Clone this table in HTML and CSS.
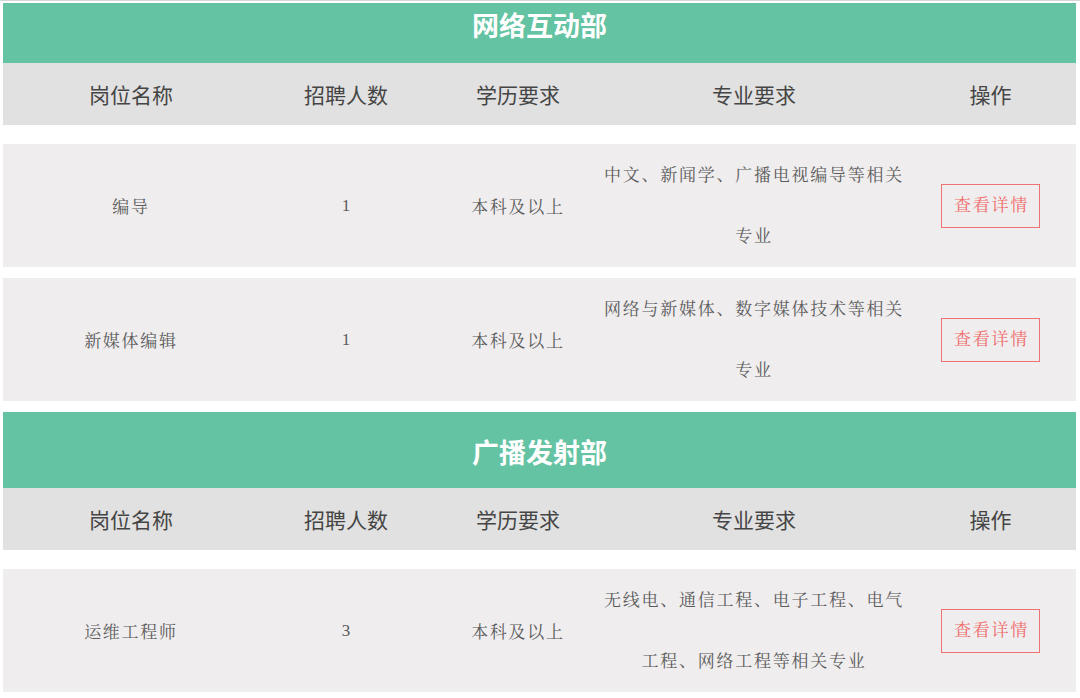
FILE: index.html
```html
<!DOCTYPE html>
<html lang="zh-CN">
<head>
<meta charset="utf-8">
<title>招聘岗位</title>
<link rel="stylesheet" href="styles.css">
</head>
<body>
<div class="page">
  <section class="dept">
    <h2 class="dept-title dept-title--cut">网络互动部</h2>
    <div class="grid table-head">
      <div>岗位名称</div><div>招聘人数</div><div>学历要求</div><div>专业要求</div><div>操作</div>
    </div>
    <div class="grid row">
      <div class="cell">编导</div>
      <div class="cell num">1</div>
      <div class="cell">本科及以上</div>
      <div class="cell major"><p>中文、新闻学、广播电视编导等相关专业</p></div>
      <div class="cell"><a class="btn" href="#">查看详情</a></div>
    </div>
    <div class="grid row">
      <div class="cell">新媒体编辑</div>
      <div class="cell num">1</div>
      <div class="cell">本科及以上</div>
      <div class="cell major"><p>网络与新媒体、数字媒体技术等相关专业</p></div>
      <div class="cell"><a class="btn" href="#">查看详情</a></div>
    </div>
  </section>
  <section class="dept">
    <h2 class="dept-title">广播发射部</h2>
    <div class="grid table-head">
      <div>岗位名称</div><div>招聘人数</div><div>学历要求</div><div>专业要求</div><div>操作</div>
    </div>
    <div class="grid row">
      <div class="cell">运维工程师</div>
      <div class="cell num">3</div>
      <div class="cell">本科及以上</div>
      <div class="cell major"><p>无线电、通信工程、电子工程、电气工程、网络工程等相关专业</p></div>
      <div class="cell"><a class="btn" href="#">查看详情</a></div>
    </div>
  </section>
</div>
</body>
</html>
```

FILE: styles.css
```css
html, body {
  margin: 0;
  padding: 0;
  background: #ffffff;
}
body {
  border-top: 1px solid #d6d6d6;
  padding-top: 2px;
}
.page {
  padding: 0 4px 0 3px;
}
.dept-title {
  margin: 0;
  height: 76px;
  padding-top: 4px;
  box-sizing: border-box;
  line-height: 72px;
  background: #64c3a2;
  color: #ffffff;
  text-align: center;
  font-family: "Noto Sans CJK SC", sans-serif;
  font-size: 27px;
  font-weight: 700;
}
.dept-title--cut {
  height: 60px;
  padding-top: 0;
  line-height: 44px;
}
.grid {
  display: grid;
  grid-template-columns: 256px 174px 170px 302px 1fr;
}
.table-head {
  height: 62px;
  line-height: 62px;
  background: #e1e1e1;
  margin-bottom: 19px;
  text-align: center;
  font-family: "Noto Sans CJK SC", sans-serif;
  font-size: 21px;
  color: #454545;
}
.row {
  min-height: 123px;
  background: #efedee;
  margin-bottom: 11px;
  font-family: "Liberation Serif", "Noto Serif CJK SC", "Noto Sans CJK SC", serif;
  font-size: 17px;
  letter-spacing: 1.75px;
  color: #5b5b5b;
}
.cell {
  display: flex;
  align-items: center;
  justify-content: center;
  text-align: center;
}
.num {
  letter-spacing: 0;
}
.major p {
  margin: 0;
  width: 301px;
  line-height: 61px;
  text-align: center;
}
.btn {
  display: inline-block;
  height: 44px;
  box-sizing: border-box;
  line-height: 42px;
  padding: 0 10px 0 12px;
  border: 1px solid #ee7272;
  color: #f06a6a;
  text-decoration: none;
}
```
